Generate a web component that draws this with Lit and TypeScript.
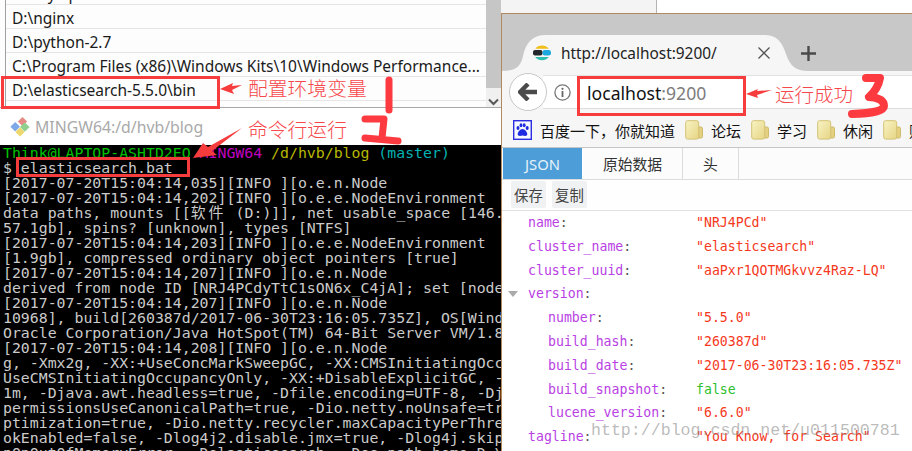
import { LitElement, html, css } from "lit";
import { customElement } from "lit/decorators.js";

const T = "2017-07-20T15:04:14";
const TERM = [
  `[${T},035][INFO ][o.e.n.Node`,
  `[${T},202][INFO ][o.e.e.NodeEnvironment`,
  html`data paths, mounts [[<span class="cjk">软件</span> (D:)]], net usable_space [146.`,
  "57.1gb], spins? [unknown], types [NTFS]",
  `[${T},203][INFO ][o.e.e.NodeEnvironment`,
  "[1.9gb], compressed ordinary object pointers [true]",
  `[${T},207][INFO ][o.e.n.Node`,
  "derived from node ID [NRJ4PCdyTtC1sON6x_C4jA]; set [node",
  `[${T},207][INFO ][o.e.n.Node`,
  "10968], build[260387d/2017-06-30T23:16:05.735Z], OS[Wind",
  "Oracle Corporation/Java HotSpot(TM) 64-Bit Server VM/1.8",
  `[${T},208][INFO ][o.e.n.Node`,
  "g, -Xmx2g, -XX:+UseConcMarkSweepGC, -XX:CMSInitiatingOcc",
  "UseCMSInitiatingOccupancyOnly, -XX:+DisableExplicitGC, -",
  "1m, -Djava.awt.headless=true, -Dfile.encoding=UTF-8, -Dj",
  "permissionsUseCanonicalPath=true, -Dio.netty.noUnsafe=tr",
  "ptimization=true, -Dio.netty.recycler.maxCapacityPerThre",
  "okEnabled=false, -Dlog4j2.disable.jmx=true, -Dlog4j.skip",
  "nOnOutOfMemoryError, -Delasticsearch, -Des.path.home=D:\\",
];

const PATHS = [
  "D:\\mysql\\",
  "D:\\nginx",
  "D:\\python-2.7",
  "C:\\Program Files (x86)\\Windows Kits\\10\\Windows Performance...",
  "D:\\elasticsearch-5.5.0\\bin",
];

type Row = { k: string; v?: string; bool?: boolean; nested?: boolean; open?: boolean };
const JSON_ROWS: Row[] = [
  { k: "name", v: '"NRJ4PCd"' },
  { k: "cluster_name", v: '"elasticsearch"' },
  { k: "cluster_uuid", v: '"aaPxr1QOTMGkvvz4Raz-LQ"' },
  { k: "version", open: true },
  { k: "number", v: '"5.5.0"', nested: true },
  { k: "build_hash", v: '"260387d"', nested: true },
  { k: "build_date", v: '"2017-06-30T23:16:05.735Z"', nested: true },
  { k: "build_snapshot", v: "false", bool: true, nested: true },
  { k: "lucene_version", v: '"6.6.0"', nested: true },
  { k: "tagline", v: '"You Know, for Search"' },
];

const folder = html`<svg class="folder" width="18" height="20" viewBox="0 0 18 20">
  <defs><linearGradient id="fg" x1="0" y1="0" x2="1" y2="1"><stop offset="0" stop-color="#f8f3c4"/><stop offset="1" stop-color="#e6d584"/></linearGradient></defs>
  <path d="M13 7h3a1.5 1.5 0 0 1 1.5 1.5v8a1.5 1.5 0 0 1-1.5 1.5h-3z" fill="#e3d080" stroke="#cdbb6c"/>
  <rect x=".7" y=".7" width="13" height="18.4" rx="2" fill="url(#fg)" stroke="#d4c274"/>
</svg>`;

@customElement("app-root")
export class AppRoot extends LitElement {
  static styles = css`
    :host { display: block; width: 912px; height: 451px; overflow: hidden; position: relative; background: #fff; font-family: "Noto Sans", "Noto Sans CJK SC", sans-serif; }
    .page { display: grid; grid-template-columns: 501px 411px; height: 451px; }
    .left { display: flex; flex-direction: column; height: 451px; min-width: 0; }
    .listwrap { display: flex; height: 108px; flex: none; border-bottom: 1px solid #a8a8a8; box-sizing: border-box; background: #fdfdfd; padding-left: 5px; }
    .list { flex: 1; min-width: 0; overflow: hidden; border-left: 1px solid #a0a0a0; }
    .rows { margin-top: -19px; }
    .row { height: 24px; box-sizing: border-box; border-bottom: 1px solid #e6e6e6; padding-left: 6px; font-size: 15.5px; line-height: 26px; color: #1a1a1a; white-space: nowrap; }
    .scroll { width: 15px; flex: none; display: flex; flex-direction: column; background: #f0f0f0; }
    .thumb { height: 88px; background: #c6c6c6; }
    .chev { flex: 1; display: flex; align-items: flex-end; justify-content: center; padding-bottom: 1px; }
    .title { height: 37px; flex: none; display: flex; align-items: center; gap: 5px; padding-left: 10px; background: #fff; color: #a9a9a9; font-size: 15.8px; }
    .term { flex: 1; min-height: 0; overflow: hidden; background: #000; color: #cbcbcb; font: 14.85px/15px "DejaVu Sans Mono", "Noto Sans CJK SC", monospace; padding: 1px 0 0 3px; }
    .tl { height: 15px; white-space: pre; }
    .cjk { display: inline-block; width: 36px; letter-spacing: 3px; }
    .g { color: #00c000; } .m { color: #c000c0; } .y { color: #b8b800; } .c { color: #00b4b4; }

    .right { display: flex; flex-direction: column; min-width: 0; height: 451px; }
    .behind { height: 13px; flex: none; display: flex; }
    .behind .a { width: 155px; background: #f4f4f4; border-right: 1px solid #b4b4b4; }
    .win { flex: 1; min-height: 0; display: flex; flex-direction: column; border-top: 1px solid #b08a5e; border-left: 1px solid #b08a5e; box-sizing: border-box; background: #fff; }
    .strip { height: 57px; flex: none; position: relative; background: #c8c8c8; display: flex; align-items: center; padding: 21px 0 0 31px; box-sizing: border-box; }
    .tabshape { position: absolute; left: 0; top: 0; }
    .fav, .tabtext, .x, .plus { position: relative; flex: none; }
    .tabtext { margin-left: 10px; width: 197px; font-size: 15.4px; color: #222; }
    .x { width: 12px; height: 12px; }
    .plus { margin-left: 31px; }
    .addr { height: 42px; flex: none; background: #f6f6f6; display: flex; align-items: center; padding-left: 7px; position: relative; box-sizing: border-box; }
    .back { width: 38px; height: 38px; border: 1px solid #c8c8c8; border-radius: 50%; background: #fff; box-sizing: border-box; display: flex; align-items: center; justify-content: center; flex: none; position: relative; }
    .field { flex: 1; height: 34px; margin-left: -4px; background: #fff; border-top: 1px solid #e2e2e2; border-bottom: 1px solid #dcdcdc; display: flex; align-items: center; padding-left: 11px; box-sizing: border-box; }
    .sep { width: 1px; height: 24px; background: #ccc; margin-left: 7px; }
    .url { margin-left: 8px; font-size: 17.6px; color: #111; padding-top: 1px; }
    .url span { color: #7d7d7d; }
    .marks { height: 35px; flex: none; background: #f6f6f6; border-bottom: 1px solid #c6c6c6; display: flex; align-items: center; padding-left: 11px; gap: 8px; box-sizing: border-box; font-family: "Noto Sans CJK SC", sans-serif; font-size: 15px; color: #111; white-space: nowrap; overflow: hidden; }
    .marks svg { flex: none; }
    .mk { display: flex; align-items: center; gap: 8px; flex: none; margin-left: 2px; }
    .tabs { height: 32px; flex: none; display: flex; background: #fcfcfc; border-bottom: 1px solid #dcdcdc; box-sizing: border-box; padding-left: 1px; font-family: "Noto Sans CJK SC", sans-serif; font-size: 14.8px; color: #333; }
    .tabs > div { display: flex; align-items: center; justify-content: center; border-right: 1px solid #dcdcdc; box-sizing: border-box; }
    .tabs .on { width: 80px; background: #4c9dd8; color: #e6f2fa; font-family: "Noto Sans", sans-serif; border-right-color: #fff; }
    .tabs .raw { width: 100px; } .tabs .hd { width: 56px; }
    .tools { height: 31px; flex: none; border-bottom: 1px solid #e2e2e2; box-sizing: border-box; padding: 1px 0 0 9px; display: flex; gap: 6px; background: #fefefe; align-items: flex-start; }
    .btn { width: 35px; height: 27px; background: #f0f1f2; border-radius: 2px; display: flex; align-items: center; justify-content: center; font: 14.4px "Noto Sans CJK SC", sans-serif; color: #444; }
    .json { flex: 1; min-height: 0; overflow: hidden; font: 13.2px/23.8px "DejaVu Sans Mono", monospace; background: #fff; }
    .jr { display: grid; grid-template-columns: 168px 1fr; height: 23.8px; padding-left: 26px; position: relative; white-space: pre; }
    .jr.n { padding-left: 46px; grid-template-columns: 148px 1fr; }
    .k { color: #b93fe4; } .colon { color: #555; }
    .v { color: #f5381c; } .v.b { color: #2fbf2f; }
    .tri { position: absolute; left: 6px; top: 9px; width: 0; height: 0; border-left: 5.5px solid transparent; border-right: 5.5px solid transparent; border-top: 6px solid #aaa; }

    .box { position: absolute; border: 3px solid #f63c3c; box-sizing: border-box; }
    .b1 { left: 1px; top: 76px; width: 219px; height: 33px; }
    .b2 { left: 16px; top: 157px; width: 174px; height: 20px; }
    .b3 { left: 577px; top: 76px; width: 169px; height: 40px; }
    .note { position: absolute; color: #f6474a; font-family: "Noto Sans CJK SC", sans-serif; font-weight: 300; white-space: nowrap; line-height: 1; }
    .n1 { left: 248px; top: 78px; font-size: 19.8px; }
    .n2 { left: 248px; top: 119px; font-size: 19.8px; }
    .n3 { left: 775px; top: 84px; font-size: 19.5px; }
    .ink { position: absolute; left: 0; top: 0; pointer-events: none; }
    .wm { position: absolute; left: 591px; top: 421px; font: 16.6px/20px "Liberation Mono", monospace; color: rgba(130,130,130,.55); white-space: nowrap; }
  `;

  render() {
    return html`
      <div class="page">
        <div class="left">
          <div class="listwrap">
            <div class="list"><div class="rows">${PATHS.map((p) => html`<div class="row">${p}</div>`)}</div></div>
            <div class="scroll">
              <div class="thumb"></div>
              <div class="chev"><svg width="11" height="8" viewBox="0 0 11 8"><path d="M1 1.5l4.5 4.500 4.500-4.500" fill="none" stroke="#555" stroke-width="2"/></svg></div>
            </div>
          </div>
          <div class="title">
            <svg width="20" height="20" viewBox="0 0 20 20">
              <path d="M12.500 0l4.600 4.600-4.600 4.600-4.600-4.600z" fill="#e58a84"/>
              <path d="M5.200 5L10 9.800 5.200 14.600.4 9.800z" fill="#7fa8e8"/>
              <path d="M14.800 5.400l4.800 4.600-4.800 4.800L10 10z" fill="#8fd08f"/>
              <path d="M10 10.400l4.600 4.600L10 19.600 5.400 15z" fill="#ecd86c"/>
            </svg>
            <span>MINGW64:/d/hvb/blog</span>
          </div>
          <div class="term">
            <div class="tl"><span class="g">Think@LAPTOP-ASHTD2EO</span> <span class="m">MINGW64</span> <span class="y">/d/hvb/blog</span> <span class="c">(master)</span></div>
            <div class="tl">$ elasticsearch.bat</div>
            ${TERM.map((l) => html`<div class="tl">${l}</div>`)}
          </div>
        </div>
        <div class="right">
          <div class="behind"><div class="a"></div></div>
          <div class="win">
            <div class="strip">
              <svg class="tabshape" width="320" height="57" viewBox="0 0 320 57"><path d="M0 57C14 57 19 52 21 42 24 28 31 21 44 21H262C275 21 280 28 284 40 288 52 294 57 306 57Z" fill="#f6f6f6"/></svg>
              <svg class="fav" width="18" height="20" viewBox="0 0 18 20">
                <path d="M2.200 5.800A9 9.500 0 0 1 15.800 5.800Z" fill="#f0bf1a"/>
                <rect x="0" y="7" width="9.500" height="5.600" rx="2" fill="#23272b"/>
                <rect x="9.500" y="7" width="8.500" height="5.600" rx="2.400" fill="#1ba9e0"/>
                <path d="M2.200 14H15.800A9 9.500 0 0 1 2.200 14Z" fill="#2fbfb0"/>
              </svg>
              <span class="tabtext">http://localhost:9200/</span>
              <svg class="x" viewBox="0 0 12 12"><path d="M.5.5l11 11M11.500.5l-11 11" stroke="#555" stroke-width="1.300"/></svg>
              <svg class="plus" width="15" height="15" viewBox="0 0 15 15"><path d="M7.500 0v15M0 7.500h15" stroke="#4a4a4a" stroke-width="2.400"/></svg>
            </div>
            <div class="addr">
              <div class="back"><svg width="20" height="18" viewBox="0 0 20 18"><path d="M10 1L2 9l8 8M3 9h16" fill="none" stroke="#4a4a4a" stroke-width="4.400"/></svg></div>
              <div class="field">
                <svg width="17" height="17" viewBox="0 0 17 17"><circle cx="8.500" cy="8.500" r="7.600" fill="none" stroke="#777" stroke-width="1.300"/><path d="M8.500 7v6" stroke="#666" stroke-width="1.800"/><circle cx="8.500" cy="4.800" r="1.100" fill="#666"/></svg>
                <div class="sep"></div>
                <div class="url">localhost<span>:9200</span></div>
              </div>
            </div>
            <div class="marks">
              <svg width="19" height="20" viewBox="0 0 19 20"><rect x=".7" y=".7" width="17.600" height="18.600" fill="#f6f8ff" stroke="#2c2ce0" stroke-width="1.400"/><g fill="#1f2be0"><ellipse cx="5" cy="8" rx="1.500" ry="2"/><ellipse cx="8" cy="5.200" rx="1.400" ry="2"/><ellipse cx="11.200" cy="5.200" rx="1.400" ry="2"/><ellipse cx="14.200" cy="8" rx="1.500" ry="2"/><path d="M9.500 9c2.200 0 4.800 3 4.800 5s-1.600 2.300-4.800 1.600C6.300 16.300 4.700 16 4.700 14S7.300 9 9.500 9z"/></g></svg>
              <span>百度一下，你就知道</span>
              <div class="mk">${folder}<span>论坛</span></div>
              <div class="mk">${folder}<span>学习</span></div>
              <div class="mk">${folder}<span>休闲</span></div>
              <div class="mk">${folder}<span>财经</span></div>
            </div>
            <div class="tabs">
              <div class="on">JSON</div>
              <div class="raw">原始数据</div>
              <div class="hd">头</div>
            </div>
            <div class="tools"><div class="btn">保存</div><div class="btn">复制</div></div>
            <div class="json">
              ${JSON_ROWS.map((r) => html`<div class="jr ${r.nested ? "n" : ""}">
                ${r.open ? html`<i class="tri"></i>` : ""}
                <div><span class="k">${r.k}</span><span class="colon">:</span></div>
                ${r.v ? html`<div class="v ${r.bool ? "b" : ""}">${r.v}</div>` : ""}
              </div>`)}
            </div>
          </div>
        </div>
      </div>

      <div class="box b1"></div><div class="box b2"></div><div class="box b3"></div>
      <div class="note n1">配置环境变量</div>
      <div class="note n2">命令行运行</div>
      <div class="note n3">运行成功</div>
      <svg class="ink" width="912" height="451" viewBox="0 0 912 451">
        <g fill="#f63c3c">
          <polygon points="220,89 233,83 232,86 242,85 232,90 234,94"/>
          <polygon points="193,158 203,143 208,147 242,128 212,151 217,155"/>
          <polygon points="746,94 758,89 757,91 772,90 757,95 758,98"/>
        </g>
        <g fill="none" stroke="#fc3a40" stroke-linecap="round" stroke-linejoin="round">
          <path d="M389 80V110" stroke-width="7"/>
          <path d="M365 119H384L382 138M365 138L398 141" stroke-width="7"/>
          <path d="M866 78H880Q878 89 869 97Q884 98 884 106Q884 113 852 114" stroke-width="8"/>
        </g>
      </svg>
      <div class="wm">http://blog.csdn.net/u011500781</div>
    `;
  }
}
